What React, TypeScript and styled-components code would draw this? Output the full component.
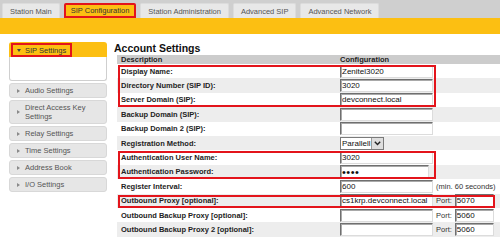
import styled, { createGlobalStyle } from 'styled-components'

const GlobalStyle = createGlobalStyle`
  html, body {
    margin: 0;
    padding: 0;
    background: #fff;
  }
  body {
    width: 500px;
    height: 244px;
    overflow: hidden;
    font-family: "Liberation Sans", Arial, sans-serif;
    color: #222;
  }
`

const YELLOW = '#fcbf12'
const RED = '#e3141b'

const tabs = ['Station Main', 'SIP Configuration', 'Station Administration', 'Advanced SIP', 'Advanced Network']
const menu = ['Audio Settings', 'Direct Access Key Settings', 'Relay Settings', 'Time Settings', 'Address Book', 'I/O Settings']

function App() {
  return (
    <>
      <GlobalStyle />
      <TabBar>
        {tabs.map((t) => (
          <Tab key={t} $active={t === 'SIP Configuration'}>{t}</Tab>
        ))}
      </TabBar>
      <Band />
      <Content>
        <Sidebar>
          <ActivePanel>
            <ActiveHeader>
              <ActiveLabel>
                <Arrow $down />
                SIP Settings
              </ActiveLabel>
            </ActiveHeader>
            <PanelBody />
          </ActivePanel>
          {menu.map((m) => (
            <MenuItem key={m}>
              <Arrow />
              <span>{m}</span>
            </MenuItem>
          ))}
        </Sidebar>

        <Main>
          <Title>Account Settings</Title>
          <Table>
            <HeaderRow>
              <span>Description</span>
              <span>Configuration</span>
            </HeaderRow>

            <Group $width={318}>
              <Row>
                <Label>Display Name:</Label>
                <Cell><Field readOnly defaultValue="Zenitel3020" /></Cell>
              </Row>
              <Row $shade>
                <Label>Directory Number (SIP ID):</Label>
                <Cell><Field readOnly defaultValue="3020" /></Cell>
              </Row>
              <Row>
                <Label>Server Domain (SIP):</Label>
                <Cell><Field readOnly defaultValue="devconnect.local" /></Cell>
              </Row>
            </Group>
            <Row $shade>
              <Label>Backup Domain (SIP):</Label>
              <Cell><Field readOnly defaultValue="" /></Cell>
            </Row>
            <Row>
              <Label>Backup Domain 2 (SIP):</Label>
              <Cell><Field readOnly defaultValue="" /></Cell>
            </Row>
            <Row $shade>
              <Label>Registration Method:</Label>
              <Cell>
                <FakeSelect>
                  <SelectText>Parallell</SelectText>
                  <SelectButton>
                    <svg width="7" height="5" viewBox="0 0 7 5">
                      <path d="M0.8 0.8 L3.5 3.6 L6.2 0.8" fill="none" stroke="#222" strokeWidth="1.4" />
                    </svg>
                  </SelectButton>
                </FakeSelect>
              </Cell>
            </Row>
            <Group $width={318}>
              <Row>
                <Label>Authentication User Name:</Label>
                <Cell><Field readOnly defaultValue="3020" /></Cell>
              </Row>
              <Row $shade>
                <Label>Authentication Password:</Label>
                <Cell><Password type="password" $width={89} readOnly defaultValue="3020" /></Cell>
              </Row>
            </Group>
            <Row>
              <Label>Register Interval:</Label>
              <Cell>
                <Field readOnly defaultValue="600" />
                <Note>(min. 60 seconds)</Note>
              </Cell>
            </Row>
            <Group $width={377}>
              <Row $shade>
                <Label>Outbound Proxy [optional]:</Label>
                <Cell>
                  <Field readOnly defaultValue="cs1krp.devconnect.local" />
                  <Note>Port:</Note>
                  <Field $width={39} readOnly defaultValue="5070" />
                </Cell>
              </Row>
            </Group>
            <Row>
              <Label>Outbound Backup Proxy [optional]:</Label>
              <Cell>
                <Field readOnly defaultValue="" />
                <Note>Port:</Note>
                <Field $width={39} readOnly defaultValue="5060" />
              </Cell>
            </Row>
            <Row $shade>
              <Label>Outbound Backup Proxy 2 [optional]:</Label>
              <Cell>
                <Field readOnly defaultValue="" />
                <Note>Port:</Note>
                <Field $width={39} readOnly defaultValue="5060" />
              </Cell>
            </Row>
          </Table>
        </Main>
      </Content>
    </>
  )
}

// Tabs

const TabBar = styled.div`
  height: 18px;
  padding-left: 2px;
  box-sizing: border-box;
  display: flex;
  align-items: flex-end;
  gap: 4px;
  background: #cfcfcf;
`

const Tab = styled.div<{ $active?: boolean }>`
  height: 15px;
  box-sizing: border-box;
  padding: 0 7px;
  display: flex;
  align-items: center;
  border-radius: 2px 2px 0 0;
  font-size: 7.5px;
  white-space: nowrap;
  color: ${(p) => (p.$active ? '#333' : '#555')};
  background: ${(p) => (p.$active ? YELLOW : '#e8e8e8')};
  border: ${(p) => (p.$active ? `2px solid ${RED}` : '1px solid #dcdcdc')};
  border-bottom: none;
  ${(p) => p.$active && `border-bottom: 2px solid ${RED}; padding: 0 5px;`}
`

const Band = styled.div`
  height: 16px;
  background: ${YELLOW};
`

// Layout

const Content = styled.div`
  display: flex;
  gap: 7px;
  padding: 8px 0 0 9px;
`

// Sidebar

const Sidebar = styled.nav`
  width: 98px;
  flex: none;
  display: flex;
  flex-direction: column;
  gap: 2px;
`

const ActivePanel = styled.div`
  display: flex;
  flex-direction: column;
`

const ActiveHeader = styled.div`
  height: 15px;
  padding: 1px 0 0 2px;
  box-sizing: border-box;
  background: ${YELLOW};
  border-radius: 3px 3px 0 0;
`

const ActiveLabel = styled.div`
  width: 61px;
  height: 14px;
  box-sizing: border-box;
  border: 2px solid ${RED};
  display: flex;
  align-items: center;
  gap: 4px;
  padding-left: 4px;
  font-size: 7.5px;
  color: #333;
  white-space: nowrap;
`

const PanelBody = styled.div`
  height: 23px;
  background: #fff;
  border: 1px solid #cfcfcf;
  border-top: none;
  border-radius: 0 0 3px 3px;
`

const MenuItem = styled.div`
  min-height: 15px;
  box-sizing: border-box;
  padding: 2px 4px 2px 7px;
  display: flex;
  align-items: center;
  gap: 5px;
  background: #e6e6e6;
  border: 1px solid #d8d8d8;
  border-radius: 3px;
  font-size: 7.5px;
  line-height: 9px;
  color: #555;
`

const Arrow = styled.span<{ $down?: boolean }>`
  flex: none;
  width: 0;
  height: 0;
  border-style: solid;
  ${(p) =>
    p.$down
      ? 'border-width: 3px 2.5px 0 2.5px; border-color: #444 transparent transparent transparent;'
      : 'border-width: 2.5px 0 2.5px 3px; border-color: transparent transparent transparent #8a8a8a;'}
`

// Main

const Main = styled.main`
  flex: 1;
  min-width: 0;
  overflow: hidden;
`

const Title = styled.h2`
  margin: 0;
  height: 13px;
  font-size: 10.5px;
  line-height: 12px;
  font-weight: bold;
  color: #111;
`

const Table = styled.div`
  margin-left: 3px;
  display: flex;
  flex-direction: column;
  font-size: 7.5px;
`

const HeaderRow = styled.div`
  height: 9px;
  display: grid;
  grid-template-columns: 219px 1fr;
  align-items: center;
  padding-left: 4px;
  background: #cccccc;
  font-weight: bold;
  color: #222;
  line-height: 9px;
`

const Group = styled.div<{ $width: number }>`
  position: relative;

  &::after {
    content: '';
    position: absolute;
    left: 1px;
    top: 1px;
    bottom: 0;
    width: ${(p) => p.$width}px;
    border: 2px solid ${RED};
    box-sizing: border-box;
    pointer-events: none;
  }
`

const Row = styled.div<{ $shade?: boolean }>`
  height: 14.4px;
  display: grid;
  grid-template-columns: 221px 1fr;
  align-items: center;
  background: ${(p) => (p.$shade ? '#ededed' : '#fff')};
`

const Label = styled.span`
  padding-left: 4px;
  font-weight: bold;
  color: #222;
  white-space: nowrap;
`

const Cell = styled.div`
  display: flex;
  align-items: center;
  gap: 3px;
  padding-left: 2px;
`

const Field = styled.input<{ $width?: number }>`
  width: ${(p) => p.$width ?? 93}px;
  height: 13px;
  box-sizing: border-box;
  margin: 0;
  padding: 0 1px;
  font-family: "Liberation Sans", Arial, sans-serif;
  font-size: 8px;
  color: #111;
  background: #fff;
  border: 1px solid;
  border-color: #6f6f6f #dcdcdc #dcdcdc #6f6f6f;
  box-shadow: inset 1px 1px 0 #a9a9a9;
  outline: none;
`

const Password = styled(Field)`
  font-size: 11px;
  letter-spacing: 0.5px;
  padding: 0 1px;
`

const Note = styled.span`
  font-size: 7.5px;
  color: #333;
  white-space: nowrap;
`

const FakeSelect = styled.div`
  height: 13px;
  box-sizing: border-box;
  display: flex;
  align-items: stretch;
  border: 1px solid #7a7a7a;
  background: #fff;
`

const SelectText = styled.span`
  padding: 0 1px;
  font-size: 8px;
  line-height: 11px;
  color: #111;
`

const SelectButton = styled.span`
  width: 11px;
  display: flex;
  align-items: center;
  justify-content: center;
  background: #dedede;
  border-left: 1px solid #9a9a9a;
`

export default App
